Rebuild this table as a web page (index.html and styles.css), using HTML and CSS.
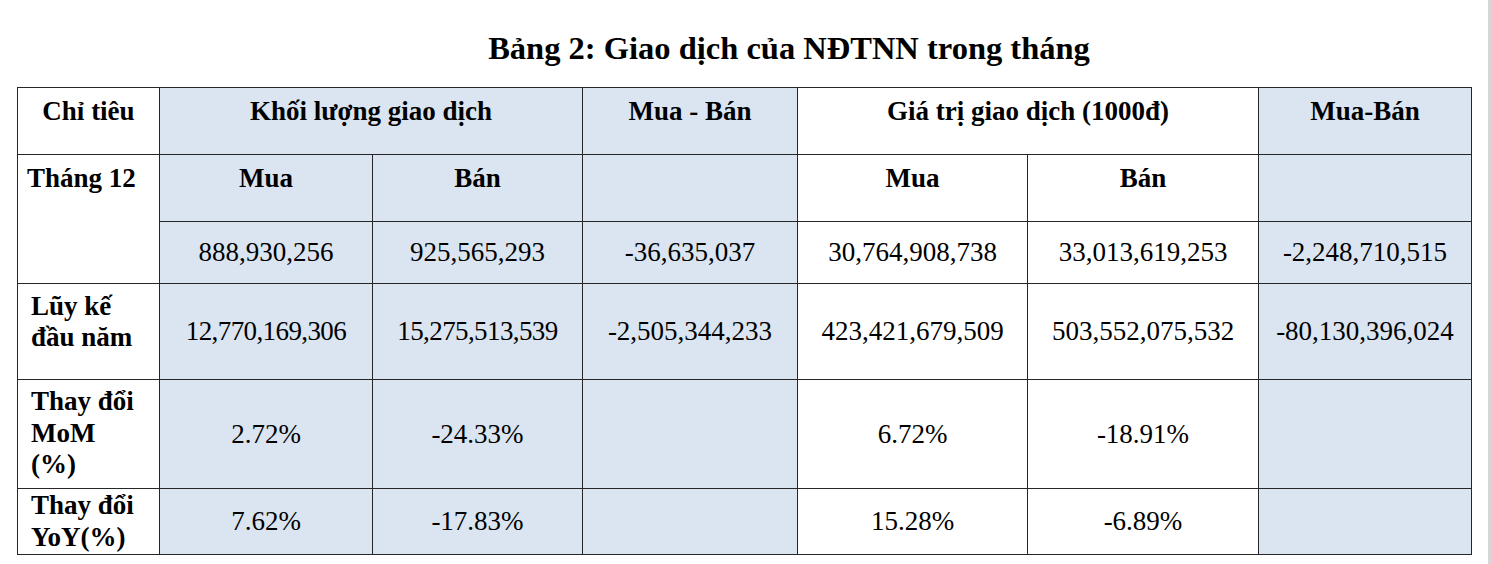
FILE: index.html
```html
<!DOCTYPE html>
<html lang="vi">
<head>
<meta charset="utf-8">
<title>Bảng 2: Giao dịch của NĐTNN trong tháng</title>
<link rel="stylesheet" href="styles.css">
</head>
<body>
<div class="page">
  <h1 class="title">Bảng 2: Giao dịch của NĐTNN trong tháng</h1>
  <table class="grid">
    <colgroup>
      <col class="c1"><col class="c2"><col class="c3"><col class="c4"><col class="c5"><col class="c6"><col class="c7">
    </colgroup>
    <tr class="r1">
      <th class="hd">Chỉ tiêu</th>
      <th class="hd blue" colspan="2">Khối lượng giao dịch</th>
      <th class="hd blue">Mua - Bán</th>
      <th class="hd" colspan="2">Giá trị giao dịch (1000đ)</th>
      <th class="hd blue">Mua-Bán</th>
    </tr>
    <tr class="r2">
      <th class="hd month" rowspan="2">Tháng 12</th>
      <th class="hd blue">Mua</th>
      <th class="hd blue">Bán</th>
      <td class="blue"></td>
      <th class="hd">Mua</th>
      <th class="hd">Bán</th>
      <td class="blue"></td>
    </tr>
    <tr class="r3">
      <td class="num blue">888,930,256</td>
      <td class="num blue">925,565,293</td>
      <td class="num blue">-36,635,037</td>
      <td class="num">30,764,908,738</td>
      <td class="num">33,013,619,253</td>
      <td class="num blue">-2,248,710,515</td>
    </tr>
    <tr class="r4">
      <th class="lab"><div class="lab-in ytd">Lũy kế<br>đầu năm</div></th>
      <td class="num blue tight">12,770,169,306</td>
      <td class="num blue tight">15,275,513,539</td>
      <td class="num blue">-2,505,344,233</td>
      <td class="num">423,421,679,509</td>
      <td class="num">503,552,075,532</td>
      <td class="num blue">-80,130,396,024</td>
    </tr>
    <tr class="r5">
      <th class="lab"><div class="lab-in mom">Thay đổi<br>MoM<br>(%)</div></th>
      <td class="num blue">2.72%</td>
      <td class="num blue">-24.33%</td>
      <td class="blue"></td>
      <td class="num">6.72%</td>
      <td class="num">-18.91%</td>
      <td class="blue"></td>
    </tr>
    <tr class="r6">
      <th class="lab"><div class="lab-in yoy">Thay đổi<br>YoY(%)</div></th>
      <td class="num blue">7.62%</td>
      <td class="num blue">-17.83%</td>
      <td class="blue"></td>
      <td class="num">15.28%</td>
      <td class="num">-6.89%</td>
      <td class="blue"></td>
    </tr>
  </table>
</div>
<div class="edge"></div>
</body>
</html>
```
FILE: styles.css
```css
html, body {
  margin: 0;
  height: 100%;
  background: #ffffff;
}
body {
  display: flex;
  font-family: "Liberation Serif", "Times New Roman", serif;
  color: #000;
}
.page {
  flex: 1;
  min-width: 0;
}
.edge {
  width: 4px;
  background: #d6d6d6;
}
.title {
  margin: 30px 0 0 90px;
  font-size: 32.5px;
  font-weight: bold;
  line-height: normal;
  text-align: center;
}
.grid {
  margin: 20px 0 0 17px;
  border-collapse: collapse;
  table-layout: fixed;
  width: 1455px;
  font-size: 27px;
}
.c1 { width: 142px; }
.c2 { width: 213px; }
.c3 { width: 210px; }
.c4 { width: 215px; }
.c5 { width: 230px; }
.c6 { width: 231px; }
.c7 { width: 213px; }
.grid th, .grid td {
  border: 1px solid #262626;
  padding: 0;
  background: #fff;
}
.grid .blue { background: #dbe5f1; }
.r1 { height: 67px; }
.r2 { height: 67px; }
.r3 { height: 62px; }
.r4 { height: 96px; }
.r5 { height: 109px; }
.r6 { height: 66px; }
.hd {
  font-weight: bold;
  text-align: center;
  vertical-align: top;
  padding-top: 8px !important;
  line-height: 31px;
}
.month {
  text-align: left;
  padding-left: 9px !important;
}
.num {
  font-weight: normal;
  text-align: center;
  vertical-align: middle;
  line-height: 31px;
}
.tight { letter-spacing: -0.6px; }
.lab {
  font-weight: bold;
  text-align: left;
  vertical-align: top;
  padding-left: 13px !important;
}
.lab-in { margin-bottom: -30px; }
.ytd { padding-top: 7px; line-height: 31px; }
.mom { padding-top: 6px; line-height: 31.5px; }
.yoy { padding-top: 0; line-height: 32px; }
```
